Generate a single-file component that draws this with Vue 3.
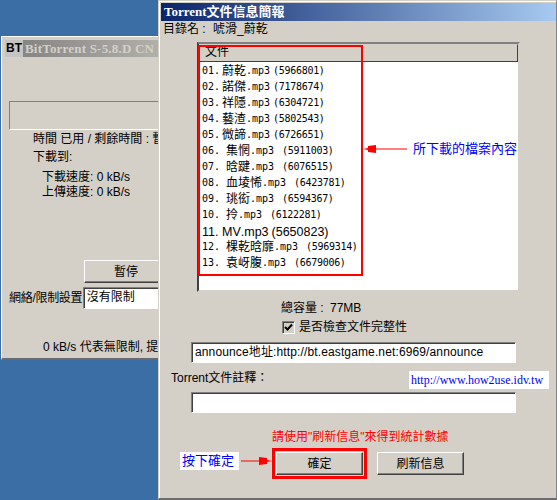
<script setup>
const files = [
  { no: "01.", name: "蔚乾", size: "(5966801)" },
  { no: "02.", name: "諾傑", size: "(7178674)" },
  { no: "03.", name: "祥隱", size: "(6304721)" },
  { no: "04.", name: "藝渣", size: "(5802543)" },
  { no: "05.", name: "微諦", size: "(6726651)" },
  { no: "06.", name: "集惘", size: "(5911003)", wide: true },
  { no: "07.", name: "晗踺", size: "(6076515)", wide: true },
  { no: "08.", name: "血堎悕", size: "(6423781)", wide: true },
  { no: "09.", name: "珧衒", size: "(6594367)", wide: true },
  { no: "10.", name: "拎", size: "(6122281)", wide: true },
  { no: "11.", name: "MV", size: "(5650823)", big: true },
  { no: "12.", name: "棵乾晗靡", size: "(5969314)", wide: true },
  { no: "13.", name: "袁岈腹", size: "(6679006)", wide: true },
];
</script>

<template>
  <div class="desktop">
    <section class="win back">
      <div class="back-title">
        <span class="bt-logo">BT</span>
        <span class="back-title-text">BitTorrent S-5.8.D CN</span>
      </div>
      <div class="progress"></div>
      <div class="stat">時間 已用 / 剩餘時間 : 暫停</div>
      <div class="stat to">下載到:</div>
      <div class="stat speed first">下載速度: 0 kB/s</div>
      <div class="stat speed">上傳速度: 0 kB/s</div>
      <button class="btn pause">暫停</button>
      <div class="limit-row">
        <span class="limit-label">網絡/限制設置</span>
        <div class="field limit">沒有限制</div>
      </div>
      <div class="limit-note">0 kB/s 代表無限制, 提</div>
    </section>

    <section class="win front">
      <header class="front-title">Torrent文件信息簡報</header>
      <div class="dir">目錄名 : <span class="dir-name">唬滑_蔚乾</span></div>

      <div class="list">
        <div class="list-head">文件</div>
        <div class="list-body">
          <div
            v-for="f in files"
            :key="f.no"
            class="file"
            :class="{ wide: f.wide, big: f.big }"
          >
            <span class="no">{{ f.no }}</span>
            <span class="nm">{{ f.name }}</span>
            <span>.mp3</span>
            <span class="sz">{{ f.size }}</span>
          </div>
        </div>
        <div class="list-mark"></div>
      </div>

      <div class="total">總容量 : <span class="total-val">77MB</span></div>
      <div class="check-row">
        <span class="check">
          <svg width="9" height="9" viewBox="0 0 9 9">
            <path d="M1 4 L3.5 6.5 L8 1.5" fill="none" stroke="#000" stroke-width="2" />
          </svg>
        </span>
        <span>是否檢查文件完整性</span>
      </div>

      <div class="field announce">announce地址:http://bt.eastgame.net:6969/announce</div>
      <div class="comment-label">Torrent文件註釋：</div>
      <div class="site">http://www.how2use.idv.tw</div>
      <div class="field comment"></div>

      <div class="hint">請使用"刷新信息"來得到統計數據</div>
      <div class="actions">
        <span class="press-note">按下確定</span>
        <svg class="arrow" width="31" height="10" viewBox="0 0 31 10">
          <path d="M0 5 H20" stroke="#f00" stroke-width="1" />
          <path d="M31 5 L26 4 V2 L18 1 V9 L26 8 V6 Z" fill="#f00" />
        </svg>
        <div class="ok-mark">
          <button class="btn ok">確定</button>
        </div>
        <button class="btn refresh">刷新信息</button>
      </div>

      <div class="annot">
        <svg width="44" height="10" viewBox="0 0 44 10">
          <path d="M0 5 L5 4 V2 L13 1 V9 L5 8 V6 Z" fill="#f00" />
          <path d="M12 5 H44" stroke="#f00" stroke-width="1" />
        </svg>
        <span>所下載的檔案內容</span>
      </div>
    </section>
  </div>
</template>

<style>
body {
  margin: 0;
  background: #3a6ea5;
}
</style>

<style scoped>
.desktop {
  position: relative;
  width: 557px;
  height: 500px;
  overflow: hidden;
  background: #3a6ea5;
  font-family: "Liberation Sans", "Noto Sans CJK TC", sans-serif;
  font-size: 12px;
  line-height: 16px;
  color: #000;
}
.win {
  position: absolute;
  box-sizing: border-box;
  background: #d4d0c8;
}

/* back window */
.back {
  left: 1px;
  top: 36px;
  width: 170px;
  height: 324px;
  padding: 3px;
  border: 1px solid #fff;
  border-bottom: 2px solid #6b6b6b;
}
.back-title {
  display: flex;
  align-items: center;
  height: 17px;
  background: linear-gradient(90deg, #808080, #b4b2ac);
}
.bt-logo {
  width: 18px;
  height: 17px;
  background: #c4c4c4;
  font-weight: bold;
  font-size: 12px;
  line-height: 17px;
  text-align: center;
}
.back-title-text {
  margin-left: 2px;
  font-family: "Liberation Serif", serif;
  font-weight: bold;
  font-size: 13px;
  letter-spacing: 0.2px;
  white-space: nowrap;
  color: #d4d0c8;
}
.progress {
  height: 27px;
  margin: 44px 0 0 4px;
  border: 1px solid;
  border-color: #808080 #808080 #fff #808080;
}
.stat {
  margin: 1px 0 0 28px;
  white-space: nowrap;
}
.to {
  margin-top: 2px;
}
.speed {
  margin: -1px 0 0 37px;
}
.first {
  margin-top: 4px;
}
.pause {
  display: block;
  width: 84px;
  margin: 60px 0 0 79px;
}
.limit-row {
  display: flex;
  align-items: center;
  height: 22px;
  margin: 4px 0 0 4px;
  white-space: nowrap;
}
.limit-label {
  width: 79px;
  letter-spacing: -0.3px;
}
.limit {
  width: 90px;
  height: 22px;
  line-height: 19px;
}
.limit-note {
  margin: 30px 0 0 38px;
  white-space: nowrap;
}

/* shared win95 controls */
.btn {
  box-sizing: border-box;
  height: 23px;
  padding: 0;
  border: 1px solid;
  border-color: #fff #404040 #404040 #fff;
  box-shadow: inset -1px -1px #808080;
  background: #d4d0c8;
  font: inherit;
  color: #000;
}
.field {
  box-sizing: border-box;
  padding-left: 3px;
  border: 1px solid;
  border-color: #808080 #fff #fff #808080;
  box-shadow: inset 1px 1px #404040;
  background: #fff;
  white-space: nowrap;
}

/* front window */
.front {
  left: 158px;
  top: 0;
  width: 399px;
  height: 500px;
  padding: 2px 0 0 2px;
  border: 1px solid #d4d0c8;
  border-right-color: #808080;
  border-bottom: 2px solid #6b6b6b;
  box-shadow: inset 1px 1px #fff;
}
.front-title {
  height: 18px;
  padding-left: 3px;
  background: linear-gradient(90deg, #0a246a, #a6caf0);
  color: #fff;
  font-family: "Liberation Serif", "Noto Sans CJK TC", serif;
  font-weight: bold;
  font-size: 13px;
  line-height: 18px;
}
.dir {
  height: 16px;
  padding-left: 2px;
}
.dir-name {
  margin-left: 4px;
}
.list {
  position: relative;
  box-sizing: border-box;
  width: 323px;
  height: 250px;
  margin: 5px 0 0 36px;
  border: 2px solid;
  border-color: #808080 #d4d0c8 #d4d0c8 #404040;
  background: #fff;
}
.list-head {
  box-sizing: border-box;
  height: 18px;
  padding-left: 5px;
  border: 1px solid;
  border-color: #d4d0c8 #404040 #404040 #d4d0c8;
  background: #d4d0c8;
  line-height: 15px;
}
.list-body {
  padding: 1px 0 0 3px;
}
.file {
  display: flex;
  height: 16px;
  font-family: "DejaVu Sans Mono", "Noto Sans CJK TC", monospace;
  font-size: 10px;
  white-space: nowrap;
}
.no {
  width: 20px;
}
.nm {
  font-size: 12px;
}
.sz {
  margin-left: 3px;
  letter-spacing: -0.3px;
}
.wide .nm {
  margin-left: 4px;
}
.wide .sz {
  margin-left: 8px;
}
.big {
  position: relative;
  top: 1px;
  font-family: "Liberation Sans", sans-serif;
  font-size: 12.5px;
}
.big .nm {
  font-size: 12.5px;
}
.big .sz {
  letter-spacing: 0;
}
.list-mark {
  position: absolute;
  left: -1px;
  top: 1px;
  box-sizing: border-box;
  width: 165px;
  height: 231px;
  border: 2px solid #f00;
}
.total {
  height: 16px;
  margin: 8px 0 0 120px;
}
.total-val {
  margin-left: 3px;
}
.check-row {
  display: flex;
  align-items: center;
  height: 16px;
  margin: 3px 0 0 121px;
}
.check {
  box-sizing: border-box;
  display: flex;
  align-items: center;
  justify-content: center;
  width: 13px;
  height: 13px;
  margin-right: 4px;
  border: 1px solid;
  border-color: #808080 #fff #fff #808080;
  box-shadow: inset 1px 1px #404040;
  background: #d4d0c8;
}
.announce {
  width: 325px;
  height: 21px;
  margin: 7px 0 0 30px;
  letter-spacing: 0.13px;
  line-height: 19px;
}
.comment-label {
  height: 16px;
  margin: 7px 0 0 10px;
}
.site {
  position: absolute;
  left: 250px;
  top: 370px;
  width: 140px;
  height: 18px;
  padding-left: 2px;
  box-sizing: border-box;
  background: #fff;
  color: #00f;
  font-family: "Liberation Serif", serif;
  font-size: 12px;
  line-height: 18px;
  white-space: nowrap;
}
.comment {
  width: 325px;
  height: 21px;
  margin: 6px 0 0 30px;
}
.hint {
  height: 16px;
  margin: 16px 0 0 111px;
  color: #f00;
  white-space: nowrap;
}
.actions {
  display: flex;
  align-items: flex-start;
  margin: 3px 0 0 19px;
}
.press-note {
  box-sizing: border-box;
  width: 59px;
  height: 18px;
  margin-top: 4px;
  padding-left: 2px;
  background: #fff;
  color: #00f;
  font-size: 13px;
  line-height: 18px;
  white-space: nowrap;
}
.arrow {
  margin: 8px 0 0 2px;
}
.ok-mark {
  padding: 1px;
  border: 3px solid #f00;
}
.ok {
  display: block;
  width: 87px;
}
.refresh {
  width: 87px;
  margin: 4px 0 0 10px;
}
.annot {
  position: absolute;
  left: 204px;
  top: 140px;
  display: flex;
  align-items: center;
  gap: 6px;
  color: #00f;
  font-size: 13px;
}
</style>
